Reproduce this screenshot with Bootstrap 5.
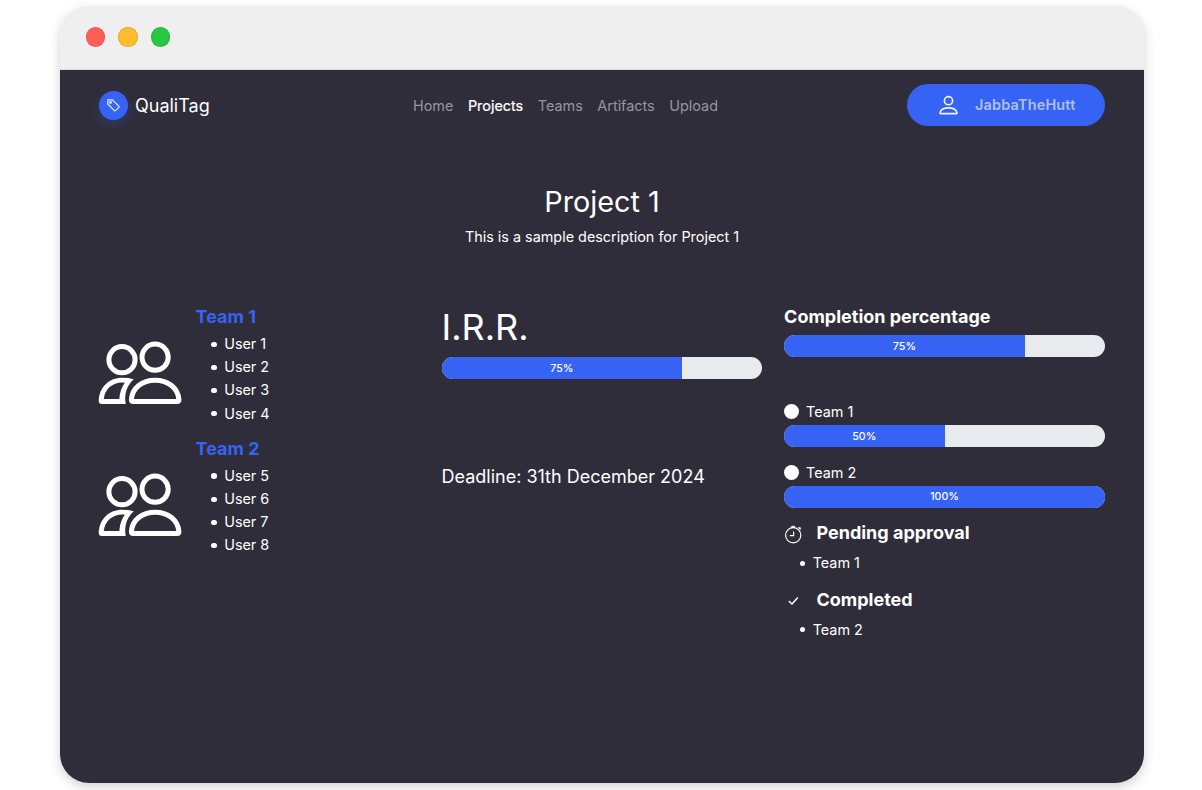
<!DOCTYPE html>
<html lang="en">
<head>
<meta charset="utf-8">
<meta name="viewport" content="width=device-width, initial-scale=1">
<title>QualiTag</title>
<link href="https://cdn.jsdelivr.net/npm/bootstrap@5.3.0/dist/css/bootstrap.min.css" rel="stylesheet">
<style>
body{font-family:Inter,"Liberation Sans",sans-serif;font-size:14.4px;line-height:23.1px;background:#fff;height:790px;overflow:hidden}
.window{width:1084px;height:777px;margin:6px 0 0 60px;border-radius:29px;background:linear-gradient(#efefef 62px,#2f2d39 62px);overflow:hidden;box-shadow:0 4px 12px rgba(0,0,0,.18)}
.titlebar{height:64px;background:#efefef;border-bottom:1.5px solid #dcdde0;padding:0 25.5px 1px;gap:13px}
.light{width:19.6px;height:19.6px;border-radius:50%;border:1px solid rgba(0,0,0,.1)}
.page{padding:0 39px;color:#fff}
.topbar{height:71px}
.logo{width:29px;height:29px;border-radius:50%;background:#3763f4;box-shadow:0 4px 12px rgba(55,99,244,.28);margin-top:-1px}
.brand{font-size:18px;color:#fff;margin-left:7px}
.menu{gap:14.6px}
.menu .nav-link{padding:0;color:#97969c}
.menu .nav-link.active{color:#fff;-webkit-text-stroke:.2px #fff}
.side{width:314px}
.user{width:198px;height:42px;border-radius:21px;background:#3763f4;color:#afc0e4;font-weight:600;letter-spacing:.2px;padding:0 0 0 32px;gap:17px;margin-top:-1px}
.hero{padding-top:43px}
.hero h1{font-size:28.8px;line-height:35px;font-weight:400;margin:0 0 6.3px}
.cols{--bs-gutter-x:21.6px;margin-top:58px}
.t18{font-size:18px;line-height:21.6px;margin:0}
.team{height:131.8px}
.team ul,.status{margin:0;padding-left:28.8px;list-style:none}
.team li,.status li{display:flex;align-items:center;margin-left:-13px}
.team li::before,.status li::before{content:"";width:5.4px;height:5.4px;border-radius:50%;background:#fff;margin:1px 7.4px 0 0}
.team ul{margin-top:4.3px}
.team .t18{color:#3763f4}
.people{margin-top:34px;width:84px;height:66px;margin-left:-1px;margin-right:13.6px}
.irr{font-size:36px;line-height:43.2px;font-weight:400;margin:0 0 7.7px}
.progress{height:21.6px;border-radius:11px;background:#e8ebee;font-size:10.8px}
.progress-bar{background:#3763f4;-webkit-text-stroke:.15px #fff}
.deadline{margin-top:87px}
.dot{width:15px;height:15px;border-radius:50%;background:#fff;margin-right:7px}
.overall{margin-top:7.5px;margin-bottom:43.3px}
.share{margin-top:2px}
.second{margin-top:14px}
.state{margin-top:14.4px}
.state svg{margin-right:14.4px}
.status{margin-top:7.2px!important}
</style>
</head>
<body>
<svg class="d-none">
  <symbol id="people" viewBox="98 340 84 66">
    <g fill="none" stroke="#fff" stroke-width="5">
      <circle cx="122" cy="359.7" r="13.1"/><circle cx="155.1" cy="357.2" r="13.1"/>
      <path d="M133.200 401.500H177.200Q179.200 401.500 178.900 399.600C178 388 168 380.200 155.100 380.200C142.200 380.200 132.200 388 131.400 399.600Q131.200 401.500 133.200 401.500Z"/>
    </g>
    <path fill="#fff" fill-rule="evenodd" d="M125.700 404H102Q98.700 404 98.700 400.800C99.500 386.500 109.500 377.800 122 377.800Q128.500 377.800 133.800 379.200C127 385 124 394 125.700 404ZM103.800 399H119.300Q119.800 389.500 124.800 382.700C113.500 381.500 104.800 388.500 103.800 399Z"/>
  </symbol>
</svg>
<div class="window">
  <div class="titlebar d-flex align-items-center">
    <span class="light" style="background:#ff5f57"></span>
    <span class="light" style="background:#febc2e"></span>
    <span class="light" style="background:#28c840"></span>
  </div>
  <div class="page">
    <nav class="topbar d-flex align-items-center">
      <div class="side d-flex align-items-center">
        <span class="logo d-flex align-items-center justify-content-center">
          <svg width="13" height="13" viewBox="0 0 13 13" fill="none" stroke="#e6ecff" stroke-width="1.200"><path d="M.8 1V5L7.300 11.700Q7.900 12.300 8.500 11.700L11.800 8.400Q12.400 7.800 11.800 7.200L5.300 .8H1Q.8 .8 .8 1Z"/><circle cx="3.500" cy="3.500" r=".8"/></svg>
        </span>
        <span class="brand">QualiTag</span>
      </div>
      <div class="menu nav">
        <a class="nav-link">Home</a><a class="nav-link active">Projects</a><a class="nav-link">Teams</a><a class="nav-link">Artifacts</a><a class="nav-link">Upload</a>
      </div>
      <div class="user d-flex align-items-center ms-auto">
        <svg width="19" height="20" viewBox="0 0 19 20" fill="none" stroke="#edf1ff" stroke-width="1.600"><circle cx="9.500" cy="5.700" r="4.100"/><path d="M1.900 18.600H17.100Q18.200 18.600 18 17.600C17 14.300 13.800 12.900 9.500 12.900S2 14.300 1 17.600Q.8 18.600 1.900 18.600Z"/></svg>
        <span>JabbaTheHutt</span>
      </div>
    </nav>
    <header class="hero text-center">
      <h1>Project 1</h1>
      <div>This is a sample description for Project 1</div>
    </header>
    <div class="row cols">
      <div class="col-4">
        <div class="team d-flex">
          <svg class="people"><use href="#people"/></svg>
          <div><h5 class="t18 fw-bold">Team 1</h5><ul><li>User 1</li><li>User 2</li><li>User 3</li><li>User 4</li></ul></div>
        </div>
        <div class="team d-flex">
          <svg class="people"><use href="#people"/></svg>
          <div><h5 class="t18 fw-bold">Team 2</h5><ul><li>User 5</li><li>User 6</li><li>User 7</li><li>User 8</li></ul></div>
        </div>
      </div>
      <div class="col-4">
        <h2 class="irr">I.R.R.</h2>
        <div class="progress"><div class="progress-bar" style="width:75%">75%</div></div>
        <p class="t18 deadline">Deadline: 31th December 2024</p>
      </div>
      <div class="col-4">
        <h5 class="t18 fw-bold">Completion percentage</h5>
        <div class="progress overall"><div class="progress-bar" style="width:75%">75%</div></div>
        <div class="d-flex align-items-center"><span class="dot"></span>Team 1</div>
        <div class="progress share"><div class="progress-bar" style="width:50%">50%</div></div>
        <div class="second d-flex align-items-center"><span class="dot"></span>Team 2</div>
        <div class="progress share"><div class="progress-bar" style="width:100%">100%</div></div>
        <div class="state d-flex align-items-center">
          <svg width="18" height="22" viewBox="0 0 18 22" fill="none" stroke="#fff" stroke-width="1.200"><circle cx="9.200" cy="13.200" r="7.600"/><path d="M9.600 9.500V13.600H5.800"/><path d="M7.700 4.300H10.700V5.500H7.700ZM14.300 5.700L16.300 5.700 16.300 7.600Z" fill="#fff" stroke-width=".8"/></svg>
          <h5 class="t18 fw-bold">Pending approval</h5>
        </div>
        <ul class="status"><li>Team 1</li></ul>
        <div class="state d-flex align-items-center">
          <svg width="18" height="21" viewBox="0 0 18 21" fill="none" stroke="#fff" stroke-width="1.500"><path d="M4.800 12L8 15L13.800 8.500"/></svg>
          <h5 class="t18 fw-bold">Completed</h5>
        </div>
        <ul class="status"><li>Team 2</li></ul>
      </div>
    </div>
  </div>
</div>
<script src="https://cdn.jsdelivr.net/npm/bootstrap@5.3.0/dist/js/bootstrap.bundle.min.js"></script>
</body>
</html>
